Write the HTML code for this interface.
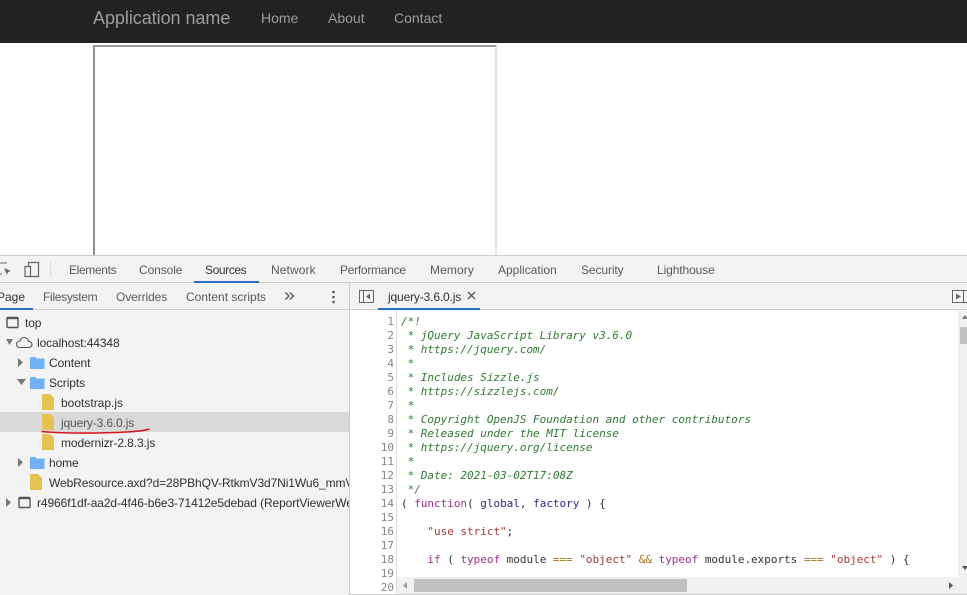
<!DOCTYPE html>
<html><head><meta charset="utf-8">
<style>
html,body{margin:0;padding:0;width:967px;height:595px;overflow:hidden;background:#fff}
body{position:relative;font-family:"Liberation Sans",sans-serif}
.a{position:absolute;white-space:nowrap}
.t{position:absolute;white-space:nowrap;font-size:12px;line-height:16px;color:#5a5a5a}
.f{position:absolute;white-space:nowrap;font-size:12px;line-height:16px;color:#303030;letter-spacing:-.1px}
.l{position:absolute;left:350px;width:44px;text-align:right;font:11px/14px "DejaVu Sans Mono",monospace;color:#858585;letter-spacing:-.02px}
.c{position:absolute;left:401px;white-space:pre;font:11px/14px "DejaVu Sans Mono",monospace;color:#333;letter-spacing:-.02px}
.g{color:#2f7a31;font-style:italic}
.m{color:#a0308c}.s{color:#a33a3a}.b{color:#2a2a8a}.o{color:#a8701c}
svg{position:absolute;overflow:visible}
</style></head><body>
<div class="a" style="left:0;top:0;width:967px;height:43px;background:#222"></div>
<div class="a" style="left:93px;top:7px;font-size:18px;line-height:22px;color:#9d9d9d;letter-spacing:-.05px">Application name</div>
<div class="a" style="left:261px;top:9px;font-size:14px;line-height:18px;color:#9d9d9d">Home</div>
<div class="a" style="left:328px;top:9px;font-size:14px;line-height:18px;color:#9d9d9d">About</div>
<div class="a" style="left:394px;top:9px;font-size:14px;line-height:18px;color:#9d9d9d">Contact</div>
<div class="a" style="left:93px;top:45px;width:400px;height:212px;border-top:2px solid #9a9a9a;border-left:2px solid #8f8f8f;border-right:2px solid #e4e4e4"></div>

<div class="a" style="left:0;top:255px;width:967px;height:28px;background:#f3f3f3;border-top:1px solid #ccc;border-bottom:1px solid #ccc;box-sizing:border-box"></div>
<svg style="left:0;top:262px" width="12" height="16"><path d="M0 1H7M0 12H2" stroke="#666" fill="none"/><path d="M4 6L11 9L8 10L7 13Z" fill="#666"/></svg>
<svg style="left:24px;top:261px" width="16" height="16"><path d="M4.500 5V1.500H14.500V15.500H6M1 5.500H6.500V15.500H1Z" stroke="#666" fill="none" stroke-width="1.200"/></svg>
<div class="a" style="left:50px;top:261px;width:1px;height:16px;background:#ddd"></div>
<div class="t" style="left:69px;top:262px;letter-spacing:-.35px">Elements</div>
<div class="t" style="left:139px;top:262px;letter-spacing:-.1px">Console</div>
<div class="t" style="left:205px;top:262px;color:#333;letter-spacing:-.4px">Sources</div>
<div class="t" style="left:271px;top:262px;letter-spacing:.1px">Network</div>
<div class="t" style="left:340px;top:262px;letter-spacing:-.27px">Performance</div>
<div class="t" style="left:430px;top:262px;letter-spacing:.1px">Memory</div>
<div class="t" style="left:498px;top:262px">Application</div>
<div class="t" style="left:581px;top:262px;letter-spacing:-.1px">Security</div>
<div class="t" style="left:657px;top:262px;letter-spacing:-.1px">Lighthouse</div>
<div class="a" style="left:194px;top:281px;width:65px;height:2px;background:#2a6fc4"></div>

<div class="a" style="left:0;top:283px;width:349px;height:312px;background:#f3f3f3"></div>
<div class="a" style="left:0;top:309px;width:349px;height:1px;background:#ccc"></div>
<div class="a" style="left:349px;top:283px;width:1px;height:312px;background:#ccc"></div>
<div class="a" style="left:350px;top:283px;width:617px;height:27px;background:#f3f3f3;border-bottom:1px solid #ccc;box-sizing:border-box"></div>
<div class="a" style="left:350px;top:594px;width:617px;height:1px;background:#ccc"></div>

<div class="t" style="left:-3px;top:289px;color:#333">Page</div>
<div class="a" style="left:0;top:308px;width:33px;height:2px;background:#2a6fc4"></div>
<div class="t" style="left:43px;top:289px;letter-spacing:-.3px">Filesystem</div>
<div class="t" style="left:116px;top:289px;letter-spacing:-.1px">Overrides</div>
<div class="t" style="left:186px;top:289px">Content scripts</div>
<svg style="left:284px;top:291px" width="12" height="12"><path d="M1.500 1.500L5 5L1.500 8.500M6 1.500L9.500 5L6 8.500" stroke="#555" fill="none" stroke-width="1.300"/></svg>
<svg style="left:331px;top:290px" width="6" height="14"><circle cx="2.500" cy="2" r="1.300" fill="#555"/><circle cx="2.500" cy="7" r="1.300" fill="#555"/><circle cx="2.500" cy="12" r="1.300" fill="#555"/></svg>

<svg style="left:6px;top:316px" width="14" height="14"><rect x="1" y="1.500" width="11" height="10" rx="1" fill="none" stroke="#555" stroke-width="1.400"/><path d="M1 2.500H12" stroke="#555" stroke-width="1.400"/></svg>
<div class="f" style="left:25px;top:315px">top</div>
<svg style="left:6px;top:339px" width="8" height="8"><path d="M0 0H7L3.500 6Z" fill="#777"/></svg>
<svg style="left:15px;top:336px" width="19" height="13"><path d="M5 11.500H13.500C15.500 11.500 17 10 17 8.500C17 6.800 15.500 5.500 14 5.500C13 3 11 1.500 9 1.500C7 1.500 5.500 3 5 5C3 5.200 1.500 6.500 1.500 8.200C1.500 10 3 11.500 5 11.500Z" fill="none" stroke="#555" stroke-width="1.100"/></svg>
<div class="f" style="left:37px;top:335px">localhost:44348</div>

<svg style="left:17px;top:358px" width="8" height="10"><path d="M1 0L6 4.500L1 9Z" fill="#777"/></svg>
<svg style="left:30px;top:357px" width="15" height="12"><path d="M0 1.500Q0 0 1.500 0H5L6.500 1.500H14.500V12H0Z" fill="#70b0f5"/></svg>
<div class="f" style="left:49px;top:355px">Content</div>
<svg style="left:17px;top:379px" width="10" height="8"><path d="M0 0H9L4.500 6Z" fill="#777"/></svg>
<svg style="left:30px;top:377px" width="15" height="12"><path d="M0 1.500Q0 0 1.500 0H5L6.500 1.500H14.500V12H0Z" fill="#70b0f5"/></svg>
<div class="f" style="left:49px;top:375px">Scripts</div>

<div class="a" style="left:0;top:412px;width:349px;height:20px;background:#d9d9d9"></div>
<svg style="left:42px;top:394px" width="12" height="16"><path d="M0 0H8L12 4V16H0Z" fill="#e6c34f"/></svg>
<div class="f" style="left:61px;top:395px;letter-spacing:0">bootstrap.js</div>
<svg style="left:42px;top:414px" width="12" height="16"><path d="M0 0H8L12 4V16H0Z" fill="#e6c34f"/></svg>
<div class="f" style="left:61px;top:415px;color:#555;letter-spacing:-.15px">jquery-3.6.0.js</div>
<svg style="left:42px;top:434px" width="12" height="16"><path d="M0 0H8L12 4V16H0Z" fill="#e6c34f"/></svg>
<div class="f" style="left:61px;top:435px">modernizr-2.8.3.js</div>
<svg style="left:41px;top:428px" width="110" height="8"><path d="M0.500 3.500C20 5.500 60 5.500 85 4C95 3.500 103 3 108.500 1" fill="none" stroke="#d8141c" stroke-width="1.600"/></svg>

<svg style="left:17px;top:458px" width="8" height="10"><path d="M1 0L6 4.500L1 9Z" fill="#777"/></svg>
<svg style="left:30px;top:457px" width="15" height="12"><path d="M0 1.500Q0 0 1.500 0H5L6.500 1.500H14.500V12H0Z" fill="#70b0f5"/></svg>
<div class="f" style="left:49px;top:455px">home</div>
<svg style="left:30px;top:474px" width="12" height="16"><path d="M0 0H8L12 4V16H0Z" fill="#e6c34f"/></svg>
<div class="a" style="left:0;top:474px;width:349px;height:20px;overflow:hidden"><div class="f" style="left:49px;top:1px">WebResource.axd?d=28PBhQV-RtkmV3d7Ni1Wu6_mmV3d7Ni1Wu6</div></div>
<svg style="left:5px;top:498px" width="8" height="10"><path d="M1 0L6 4.500L1 9Z" fill="#777"/></svg>
<svg style="left:18px;top:496px" width="14" height="14"><rect x="1" y="1.500" width="11" height="10" rx="1" fill="none" stroke="#555" stroke-width="1.400"/><path d="M1 2.500H12" stroke="#555" stroke-width="1.400"/></svg>
<div class="a" style="left:0;top:494px;width:349px;height:20px;overflow:hidden"><div class="f" style="left:37px;top:1px">r4966f1df-aa2d-4f46-b6e3-71412e5debad (ReportViewerWebControl)</div></div>

<svg style="left:359px;top:290px" width="15" height="13"><rect x="0.500" y="0.500" width="14" height="12" fill="none" stroke="#666"/><path d="M4.500 0.500V12.500" stroke="#666"/><path d="M11 3.500V9.500L7 6.500Z" fill="#666"/></svg>
<div class="a" style="left:378px;top:283px;width:102px;height:27px;background:#f3f3f3"></div>
<div class="t" style="left:388px;top:289px;color:#333;letter-spacing:-.15px">jquery-3.6.0.js</div>
<svg style="left:467px;top:291px" width="9" height="9"><path d="M1 1L8 8M8 1L1 8" stroke="#555" stroke-width="1.300"/></svg>
<div class="a" style="left:378px;top:308px;width:102px;height:2px;background:#2a6fc4"></div>
<svg style="left:952px;top:290px" width="15" height="13"><rect x="0.500" y="0.500" width="16" height="12" fill="none" stroke="#666"/><path d="M11.500 0.500V12.500" stroke="#666"/><path d="M4 3.500V9.500L9 6.500Z" fill="#666"/></svg>

<div class="a" style="left:396px;top:310px;width:1px;height:284px;background:#ddd"></div>
<div class="l" style="top:315px">1</div><div class="l" style="top:329px">2</div><div class="l" style="top:343px">3</div><div class="l" style="top:357px">4</div><div class="l" style="top:371px">5</div><div class="l" style="top:385px">6</div><div class="l" style="top:399px">7</div><div class="l" style="top:413px">8</div><div class="l" style="top:427px">9</div><div class="l" style="top:441px">10</div><div class="l" style="top:455px">11</div><div class="l" style="top:469px">12</div><div class="l" style="top:483px">13</div><div class="l" style="top:497px">14</div><div class="l" style="top:511px">15</div><div class="l" style="top:525px">16</div><div class="l" style="top:539px">17</div><div class="l" style="top:553px">18</div><div class="l" style="top:567px">19</div><div class="l" style="top:581px">20</div>

<div class="c g" style="top:315px">/*!</div>
<div class="c g" style="top:329px"> * jQuery JavaScript Library v3.6.0</div>
<div class="c g" style="top:343px"> * https://jquery.com/</div>
<div class="c g" style="top:357px"> *</div>
<div class="c g" style="top:371px"> * Includes Sizzle.js</div>
<div class="c g" style="top:385px"> * https://sizzlejs.com/</div>
<div class="c g" style="top:399px"> *</div>
<div class="c g" style="top:413px"> * Copyright OpenJS Foundation and other contributors</div>
<div class="c g" style="top:427px"> * Released under the MIT license</div>
<div class="c g" style="top:441px"> * https://jquery.org/license</div>
<div class="c g" style="top:455px"> *</div>
<div class="c g" style="top:469px"> * Date: 2021-03-02T17:08Z</div>
<div class="c g" style="top:483px"> */</div>
<div class="c" style="top:497px">( <span class="m">function</span>( <span class="b">global</span>, <span class="b">factory</span> ) {</div>
<div class="c" style="top:525px">    <span class="s">"use strict"</span>;</div>
<div class="c" style="top:553px">    <span class="m">if</span> ( <span class="m">typeof</span> module <span class="o">===</span> <span class="s">"object"</span> <span class="o">&amp;&amp;</span> <span class="m">typeof</span> module.exports <span class="o">===</span> <span class="s">"object"</span> ) {</div>

<div class="a" style="left:958px;top:310px;width:9px;height:284px;background:#f1f1f1"></div>
<div class="a" style="left:960px;top:327px;width:7px;height:17px;background:#c1c1c1"></div>
<svg style="left:962px;top:315px" width="5" height="5"><path d="M0 4L3 0L6 4Z" fill="#777"/></svg>
<svg style="left:962px;top:566px" width="5" height="5"><path d="M0 0L3 4L6 0Z" fill="#555"/></svg>
<div class="a" style="left:397px;top:577px;width:561px;height:17px;background:#f1f1f1"></div>
<div class="a" style="left:414px;top:579px;width:273px;height:13px;background:#c1c1c1"></div>
<svg style="left:403px;top:582px" width="5" height="8"><path d="M4 0V7L0 3.500Z" fill="#999"/></svg>
<svg style="left:949px;top:582px" width="5" height="8"><path d="M0 0V7L4 3.500Z" fill="#555"/></svg>
</body></html>
